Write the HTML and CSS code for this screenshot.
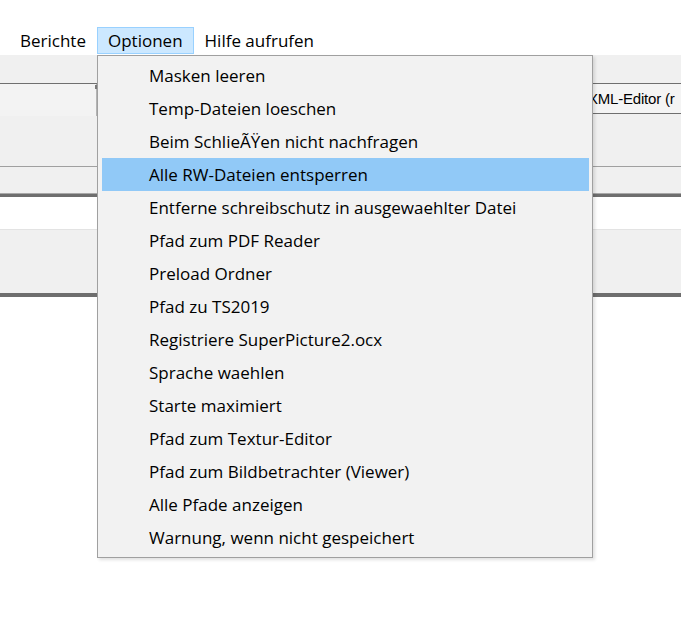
FILE: index.html
```html
<!DOCTYPE html>
<html lang="de">
<head>
<meta charset="utf-8">
<title>Optionen</title>
<link rel="stylesheet" href="styles.css">
</head>
<body>
<div class="window">
  <div class="topgap"></div>
  <div class="menubar">
    <div class="mb-item">Berichte</div>
    <div class="mb-item active">Optionen</div>
    <div class="mb-item">Hilfe aufrufen</div>
  </div>
  <div class="content">
    <div class="band toolbar"></div>
    <div class="band panel">
      <div class="panel-row">
        <div class="left-ctrl"><span class="notch"></span></div>
        <div class="xml-box">XML-Editor (r</div>
      </div>
    </div>
    <div class="band strip"></div>
    <div class="band whiteband"></div>
    <div class="band grayband"></div>
    <div class="band rest"></div>
  </div>

  <div class="dropdown">
    <div class="dd-item">Masken leeren</div>
    <div class="dd-item">Temp-Dateien loeschen</div>
    <div class="dd-item">Beim SchlieÃŸen nicht nachfragen</div>
    <div class="dd-item hl">Alle RW-Dateien entsperren</div>
    <div class="dd-item">Entferne schreibschutz in ausgewaehlter Datei</div>
    <div class="dd-item">Pfad zum PDF Reader</div>
    <div class="dd-item">Preload Ordner</div>
    <div class="dd-item">Pfad zu TS2019</div>
    <div class="dd-item">Registriere SuperPicture2.ocx</div>
    <div class="dd-item">Sprache waehlen</div>
    <div class="dd-item">Starte maximiert</div>
    <div class="dd-item">Pfad zum Textur-Editor</div>
    <div class="dd-item">Pfad zum Bildbetrachter (Viewer)</div>
    <div class="dd-item">Alle Pfade anzeigen</div>
    <div class="dd-item">Warnung, wenn nicht gespeichert</div>
  </div>
</div>
</body>
</html>
```

FILE: styles.css
```css
* { box-sizing: border-box; }
html, body { margin: 0; padding: 0; background: #ffffff; }
body {
  font-family: "Open Sans", "Noto Sans", "Liberation Sans", sans-serif;
  font-size: 17px;
  color: #000;
}
.window {
  position: relative;
  width: 681px;
  height: 622px;
  overflow: hidden;
  background: #ffffff;
}
.topgap { height: 27px; }
.menubar {
  display: flex;
  height: 28px;
  padding-left: 9px;
  background: #ffffff;
}
.mb-item {
  display: flex;
  align-items: center;
  height: 27px;
  padding: 0 10px;
  border: 1px solid transparent;
  line-height: 1;
  white-space: nowrap;
}
.mb-item.active {
  background: #cce8ff;
  border-color: #99d1ff;
}
.content { display: flex; flex-direction: column; }
.band { width: 100%; }
.toolbar {
  height: 28px;
  background: #f0f0f0;
}
.panel {
  height: 84px;
  background: #f0f0f0;
  border-top: 1px solid #6f6f6f;
  border-bottom: 1px solid #a0a0a0;
}
.panel-row {
  display: flex;
  justify-content: space-between;
  height: 30px;
}
.left-ctrl {
  position: relative;
  width: 97px;
  height: 32px;
  border-right: 1px solid #b4b4b4;
  background: #f3f3f3;
}
.notch {
  position: absolute;
  right: -1px;
  top: 1px;
  width: 2px;
  height: 4px;
  background: #7a7a7a;
}
.xml-box {
  width: 96px;
  height: 30px;
  padding-left: 3px;
  border-bottom: 1px solid #6f6f6f;
  background: #f4f4f4;
  font-family: "Liberation Sans", "DejaVu Sans", sans-serif;
  font-size: 15px;
  letter-spacing: -0.2px;
  line-height: 29px;
  white-space: nowrap;
  overflow: hidden;
}
.strip {
  height: 30px;
  background: #f0f0f0;
  border-bottom: 3px solid #6e6e6e;
  box-shadow: inset 0 -1px 0 #a8a8a8;
}
.whiteband {
  height: 33px;
  background: #ffffff;
  border-bottom: 1px solid #e3e3e3;
}
.grayband {
  height: 67px;
  background: #f0f0f0;
  border-bottom: 4px solid #6e6e6e;
}
.rest {
  height: 330px;
  background: #ffffff;
}
.dropdown {
  position: absolute;
  left: 97px;
  top: 55px;
  width: 496px;
  padding: 3px 3px 3px 4px;
  background: #f2f2f2;
  border: 1px solid #a0a0a0;
  box-shadow: 2px 2px 3px rgba(0, 0, 0, 0.12);
}
.dd-item {
  height: 33px;
  line-height: 33px;
  padding-left: 47px;
  white-space: nowrap;
  color: #000;
}
.dd-item.hl { background: #91c9f7; }
```
